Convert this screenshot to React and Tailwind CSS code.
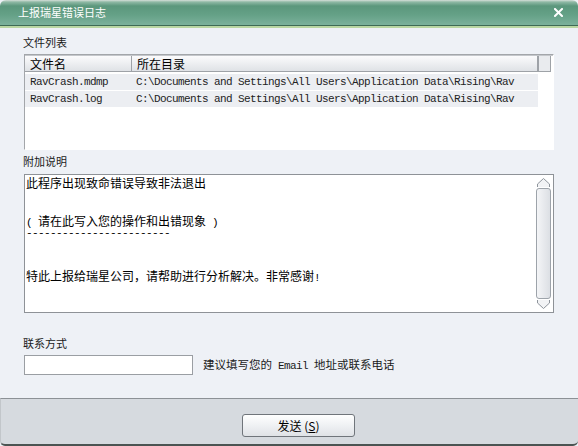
const CJK = "font-['Noto_Sans_CJK_SC','Noto_Sans',sans-serif]";
const MONO = "font-['Liberation_Mono',monospace] text-[11px] tracking-[-0.6px]";

const FILES = [
    { name: 'RavCrash.mdmp', dir: 'C:\\Documents and Settings\\All Users\\Application Data\\Rising\\Rav' },
    { name: 'RavCrash.log', dir: 'C:\\Documents and Settings\\All Users\\Application Data\\Rising\\Rav' },
];

function Label({ children }) {
    return <div className="h-[14px] leading-[14px] text-[11px] text-[#1a1a1a] pl-[23px]">{children}</div>;
}

function FileList() {
    return (
        <div className="mx-[24px] mt-[5px] h-[96px] bg-white border-t border-l border-[#a3a6aa] border-r border-b border-r-white border-b-white">
            <div className="flex h-[17px] border-t border-[#c4c7cb]">
                <div className="w-[107px] h-full flex items-center pl-[5px] text-[12px] border-r border-b border-[#9ea2a7] bg-[linear-gradient(to_bottom,#fbfbfc,#dfe2e6)]">文件名</div>
                <div className="w-[406px] h-full flex items-center pl-[5px] text-[12px] border-r border-b border-[#9ea2a7] bg-[linear-gradient(to_bottom,#fbfbfc,#dfe2e6)]">所在目录</div>
                <div className="w-[13px] h-full border border-t-0 border-[#9ea2a7] bg-[#e9ebee]" />
            </div>
            <div className="mt-[2px] flex flex-col gap-[1px] w-[513px]">
                {FILES.map((f) => (
                    <div key={f.name} className={`flex h-[16px] items-center bg-[#eceef2] ${MONO} text-[#222]`}>
                        <div className="w-[107px] pl-[5px] whitespace-pre">{f.name}</div>
                        <div className="pl-[4px] whitespace-pre">{f.dir}</div>
                    </div>
                ))}
            </div>
        </div>
    );
}

function ScrollBar() {
    return (
        <div className="absolute right-[1px] top-[2px] bottom-[2px] w-[17px] flex flex-col items-center">
            <svg width="15" height="11" viewBox="0 0 15 11" className="shrink-0">
                <path d="M1.5 10 L1.5 7 L7.5 1.5 L13.5 7 L13.5 10" fill="#f2f3f5" stroke="#8f959c" strokeWidth="1" />
            </svg>
            <div className="flex-1 w-[15px] rounded-[3px] border border-[#9da3aa] bg-[linear-gradient(to_right,#f4f5f7,#dcdfe4)]" />
            <svg width="15" height="11" viewBox="0 0 15 11" className="shrink-0">
                <path d="M1.5 1 L1.5 4 L7.5 9.5 L13.5 4 L13.5 1" fill="#f2f3f5" stroke="#8f959c" strokeWidth="1" />
            </svg>
        </div>
    );
}

function Note() {
    return (
        <div className="relative mx-[24px] mt-[6px] h-[139px] bg-white border border-[#8e9297]">
            <div className="pl-[1px] pt-[2px] text-[12px] text-black">
                <div className="h-[12px] leading-[12px]">此程序出现致命错误导致非法退出</div>
                <div className="mt-[26px] h-[12px] leading-[12px] whitespace-pre">
                    <span className={MONO}>( </span>请在此写入您的操作和出错现象<span className={MONO}> )</span>
                </div>
                <div className={`h-[12px] leading-[12px] ${MONO}`}>------------------------</div>
                <div className="mt-[31px] h-[12px] leading-[12px]">
                    特此上报给瑞星公司，请帮助进行分析解决。非常感谢<span className={MONO}>!</span>
                </div>
            </div>
            <ScrollBar />
        </div>
    );
}

export default function App() {
    return (
        <div className={`w-[578px] h-[446px] flex flex-col overflow-hidden bg-[#eef1f6] ${CJK}`}>
            <div className="h-[26px] shrink-0 rounded-t-[6px] flex items-center justify-between pl-[18px] pr-[15px] bg-[linear-gradient(to_bottom,#d6dfda_0px,#8fb9a5_2px,#5b977c_6px,#65a187_15px,#7bb19b_25px)] border-b border-[#3e6b55]">
                <span className="text-white text-[11px] leading-none">上报瑞星错误日志</span>
                <svg width="9" height="9" viewBox="0 0 9 9">
                    <path d="M1 1 L8 8 M8 1 L1 8" stroke="white" strokeWidth="2" strokeLinecap="square" />
                </svg>
            </div>
            <div className="h-[2px] shrink-0 bg-[#b9d6a2]" />

            <div className="flex-1 flex flex-col pt-[7px]">
                <Label>文件列表</Label>
                <FileList />
                <div className="mt-[4px]"><Label>附加说明</Label></div>
                <Note />
                <div className="mt-[23px]"><Label>联系方式</Label></div>
                <div className="mt-[5px] flex items-center pl-[24px]">
                    <div className="w-[169px] h-[20px] bg-white border border-[#9a9ea3]" />
                    <span className="ml-[10px] text-[11.5px] text-[#1a1a1a] whitespace-pre">
                        建议填写您的<span className={MONO}> Email </span>地址或联系电话
                    </span>
                </div>
            </div>

            <div className="h-[48px] shrink-0 border-t border-[#8c9196] bg-[#d6dadf] rounded-b-[5px] border-b-2 border-b-[#4b5452] border-l border-l-[#c2c6ca] flex justify-center pt-[15px]">
                <button className="w-[113px] h-[23px] ml-[18px] rounded-[3px] border border-[#70757b] bg-[linear-gradient(to_bottom,#ffffff,#eceef1_60%,#dfe2e6)] text-[12px] text-black">
                    发送 (<span className="underline">S</span>)
                </button>
            </div>
        </div>
    );
}
